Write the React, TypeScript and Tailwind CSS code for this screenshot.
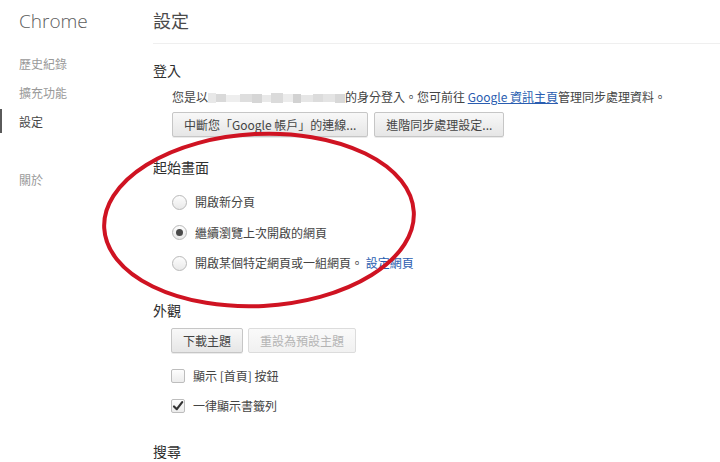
import React from "react";

const font = { fontFamily: '"Noto Sans CJK TC", "Liberation Sans", sans-serif' };

function Btn({ children, disabled }: { children: React.ReactNode; disabled?: boolean }) {
  return (
    <div
      className={
        disabled
          ? "h-[25px] px-[11px] flex items-center rounded-[2px] border border-[#dcdcdc] bg-gradient-to-b from-[#fafafa] to-[#f1f1f1] text-[12px] text-[#b4b4b4] whitespace-pre"
          : "h-[25px] px-[11px] flex items-center rounded-[2px] border border-[#c6c6c6] bg-gradient-to-b from-[#f8f8f8] to-[#e6e6e6] text-[12px] text-[#444] shadow-[0_1px_0_rgba(0,0,0,0.08)] whitespace-pre"
      }
    >
      {children}
    </div>
  );
}

function Radio({ checked, children }: { checked?: boolean; children: React.ReactNode }) {
  return (
    <div className="h-[20px] flex items-center">
      <div className="w-[15px] h-[15px] rounded-full border border-[#b9b9b9] bg-gradient-to-b from-[#fdfdfd] to-[#e9e9e9] flex items-center justify-center">
        {checked && <div className="w-[7px] h-[7px] rounded-full bg-[#4a4a4a]" />}
      </div>
      <div className="ml-[8px] text-[12px] text-[#444]">{children}</div>
    </div>
  );
}

function Check({ checked, children }: { checked?: boolean; children: React.ReactNode }) {
  return (
    <div className="h-[20px] flex items-center">
      <div className="w-[14px] h-[14px] rounded-[2px] border border-[#bdbdbd] bg-gradient-to-b from-[#fdfdfd] to-[#ececec] flex items-center justify-center">
        {checked && (
          <svg width="12" height="12" viewBox="0 0 12 12">
            <path d="M2 6.5 L4.8 9.2 L10.2 2.2" fill="none" stroke="#333" strokeWidth="2.2" strokeLinecap="round" strokeLinejoin="round" />
          </svg>
        )}
      </div>
      <div className="ml-[8px] text-[12px] text-[#444]">{children}</div>
    </div>
  );
}

function Blur() {
  return (
    <span className="inline-flex items-center h-[12px] w-[137px] align-[-1px]">
      <span className="w-[8px] h-[10px] bg-[#e8e8e8]" />
      <span className="w-[10px] h-[8px] bg-[#d9d9d9]" />
      <span className="w-[14px] h-[7px] bg-[#eeeeee]" />
      <span className="w-[12px] h-[8px] bg-[#dedede]" />
      <span className="w-[10px] h-[9px] bg-[#d6d6d6]" />
      <span className="w-[9px] h-[7px] bg-[#e9e9e9]" />
      <span className="w-[12px] h-[10px] bg-[#dbdbdb]" />
      <span className="w-[10px] h-[8px] bg-[#ececec]" />
      <span className="w-[8px] h-[9px] bg-[#d2d2d2]" />
      <span className="w-[12px] h-[7px] bg-[#e6e6e6]" />
      <span className="w-[10px] h-[8px] bg-[#dcdcdc]" />
      <span className="w-[12px] h-[8px] bg-[#e4e4e4]" />
      <span className="w-[10px] h-[9px] bg-[#d8d8d8]" />
    </span>
  );
}

export default function App() {
  return (
    <div className="relative w-[720px] h-[462px] overflow-hidden bg-white flex" style={font}>
      {/* Sidebar */}
      <div className="w-[153px] shrink-0 flex flex-col">
        <div className="pl-[19px] pt-[8px] h-[49px] text-[19px] leading-[26px] text-[#5c5c5c]" style={{ fontFamily: '"Open Sans", "Liberation Sans", sans-serif', fontWeight: 300 }}>
          Chrome
        </div>
        <div className="pl-[19px] h-[29px] flex items-center text-[12px] text-[#999]">歷史紀錄</div>
        <div className="pl-[19px] h-[29px] flex items-center text-[12px] text-[#999]">擴充功能</div>
        <div className="relative pl-[19px] h-[29px] flex items-center text-[12px] text-[#464646]">
          <div className="absolute left-0 top-[2px] w-[2px] h-[24px] bg-[#5a5a5a]" />
          設定
        </div>
        <div className="pl-[19px] mt-[29px] h-[29px] flex items-center text-[12px] text-[#999]">關於</div>
      </div>

      {/* Main */}
      <div className="flex-1 flex flex-col">
        <div className="h-[44px] border-b border-[#efefef] pt-[8px]">
          <div className="text-[18px] leading-[24px] text-[#4a4a4a]">設定</div>
        </div>

        <div className="mt-[16px] h-[20px] flex items-center text-[14px] text-[#303030]">登入</div>
        <div className="mt-[8px] h-[18px] pl-[19px] text-[12px] leading-[18px] text-[#444] whitespace-nowrap">
          您是以<Blur />的身分登入。您可前往 <span className="text-[#2a5db0] underline">Google 資訊主頁</span>管理同步處理資料。
        </div>
        <div className="mt-[6px] pl-[19px] flex gap-[6px]">
          <Btn>中斷您「Google 帳戶」的連線...</Btn>
          <Btn>進階同步處理設定...</Btn>
        </div>

        <div className="mt-[20px] h-[20px] flex items-center text-[14px] text-[#303030]">起始畫面</div>
        <div className="mt-[15px] pl-[19px] flex flex-col gap-[10.5px]">
          <Radio>開啟新分頁</Radio>
          <Radio checked>繼續瀏覽上次開啟的網頁</Radio>
          <Radio>
            開啟某個特定網頁或一組網頁。 <span className="text-[#2a5db0]">設定網頁</span>
          </Radio>
        </div>

        <div className="mt-[27px] h-[20px] flex items-center text-[14px] text-[#303030]">外觀</div>
        <div className="mt-[8px] pl-[18px] flex gap-[5px]">
          <Btn>下載主題</Btn>
          <Btn disabled>重設為預設主題</Btn>
        </div>
        <div className="mt-[13px] pl-[18px] flex flex-col gap-[10px]">
          <Check>顯示 [首頁] 按鈕</Check>
          <Check checked>一律顯示書籤列</Check>
        </div>

        <div className="mt-[25px] h-[20px] flex items-center text-[14px] text-[#303030]">搜尋</div>
      </div>

      {/* Red annotation ellipse */}
      <svg className="absolute left-0 top-0 pointer-events-none" width="720" height="462" viewBox="0 0 720 462">
        <ellipse cx="259" cy="220" rx="155" ry="86" transform="rotate(-3 259 220)" fill="none" stroke="#cf1322" strokeWidth="4" />
      </svg>
    </div>
  );
}
